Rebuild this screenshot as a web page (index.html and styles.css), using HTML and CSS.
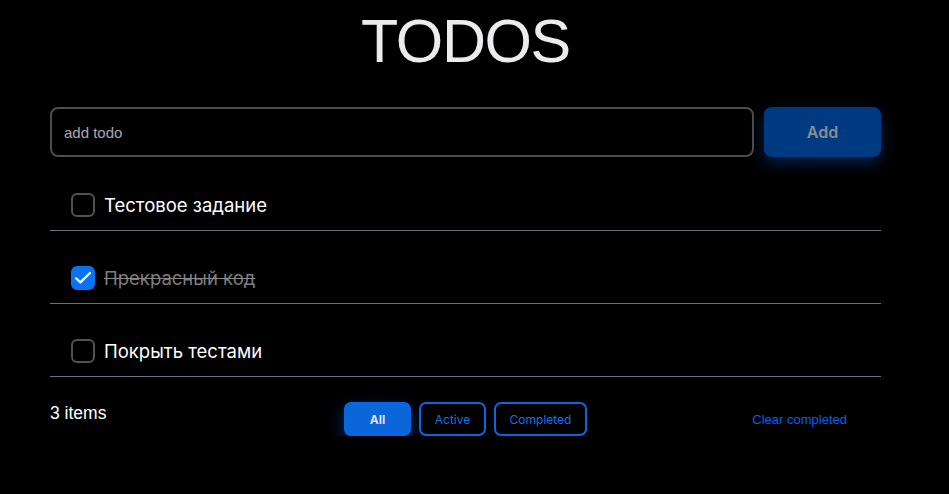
FILE: index.html
```html
<!DOCTYPE html>
<html lang="ru">
<head>
<meta charset="utf-8">
<title>TODOS</title>
<link rel="stylesheet" href="styles.css">
</head>
<body>
<main class="app">
  <h1 class="title">TODOS</h1>
  <form class="add-form">
    <input class="add-input" type="text" placeholder="add todo">
    <button class="add-btn" type="button">Add</button>
  </form>
  <ul class="list">
    <li class="item">
      <span class="check"></span>
      <span class="label">Тестовое задание</span>
    </li>
    <li class="item done">
      <span class="check checked">
        <svg viewBox="0 0 24 24" width="24" height="24"><path d="M5 12.3l4.4 4.1 9.6-9.4" fill="none" stroke="#fff" stroke-width="2.2" stroke-linecap="round" stroke-linejoin="round"/></svg>
      </span>
      <span class="label">Прекрасный код</span>
    </li>
    <li class="item">
      <span class="check"></span>
      <span class="label">Покрыть тестами</span>
    </li>
  </ul>
  <footer class="footer">
    <span class="count">3 items</span>
    <div class="filters">
      <button class="filter active" type="button">All</button>
      <button class="filter" type="button">Active</button>
      <button class="filter" type="button">Completed</button>
    </div>
    <button class="clear" type="button">Clear completed</button>
  </footer>
</main>
</body>
</html>
```
FILE: styles.css
```css
* { box-sizing: border-box; }
html, body { margin: 0; background: #000; }
body { font-family: "Inter", "Liberation Sans", sans-serif; color: #fff; }
.app { width: 831px; margin: 0 0 0 50px; }
.title {
  margin: 0;
  padding-top: 6px;
  height: 107px;
  text-align: center;
  font-family: "Liberation Sans", Arial, sans-serif;
  font-weight: 400;
  font-size: 61px;
  letter-spacing: -1.4px;
  line-height: 70px;
  color: #ececee;
}
.add-form { display: flex; gap: 10px; margin: 0; }
.add-input {
  flex: 1;
  height: 50px;
  background: #000;
  border: 2px solid #4c4c4e;
  border-radius: 8px;
  padding: 0 12px;
  font-family: "Liberation Sans", Arial, sans-serif;
  font-size: 15px;
  color: #fff;
  outline: none;
}
.add-input::placeholder { color: #a6aab4; }
.add-btn {
  width: 117px;
  height: 50px;
  border: none;
  border-radius: 8px;
  background: #003a80;
  color: #8a8d93;
  font-family: "Inter", sans-serif;
  font-weight: 600;
  font-size: 16px;
  box-shadow: 0 6px 16px rgba(0, 70, 170, 0.45);
}
.list { list-style: none; margin: 1px 0 0; padding: 0; }
.item {
  display: flex;
  align-items: center;
  gap: 9px;
  padding: 35px 0 13px 21px;
  border-bottom: 1px solid #6c7082;
}
.check {
  width: 24px;
  height: 24px;
  border: 2px solid #505256;
  border-radius: 6px;
  display: flex;
  align-items: center;
  justify-content: center;
  flex-shrink: 0;
}
.check.checked { background: #0a72f5; border-color: #0a72f5; }
.check svg { display: block; width: 24px; height: 24px; margin: -2px; flex-shrink: 0; }
.label { font-size: 18.5px; line-height: 24px; color: #fff; }
.done .label { color: #7d7d7f; text-decoration: line-through; text-decoration-color: #8a8a8c; }
.footer {
  display: grid;
  grid-template-columns: 1fr auto 1fr;
  align-items: center;
  padding-top: 25px;
}
.count {
  font-family: "Liberation Sans", Arial, sans-serif;
  font-size: 17.5px;
  color: #fff;
  align-self: start;
  padding-top: 1px;
}
.filters { display: flex; gap: 8px; }
.filter {
  height: 34px;
  padding: 0 12px;
  border: 2px solid #0a66e3;
  border-radius: 7px;
  background: transparent;
  color: #1472f0;
  font-family: "Inter", sans-serif;
  font-size: 12px;
}
.filter:nth-child(2) { width: 67px; }
.filter:nth-child(3) { width: 93px; }
.filter.active {
  width: 67px;
  background: #0a66d9;
  color: #dfe3ea;
  font-weight: 700;
  box-shadow: 0 6px 16px rgba(0, 90, 220, 0.5);
}
.clear {
  justify-self: end;
  margin-right: 30px;
  background: none;
  border: none;
  color: #0a5ef0;
  font-family: "Liberation Sans", Arial, sans-serif;
  font-size: 13px;
  padding: 8px 4px;
}
```
